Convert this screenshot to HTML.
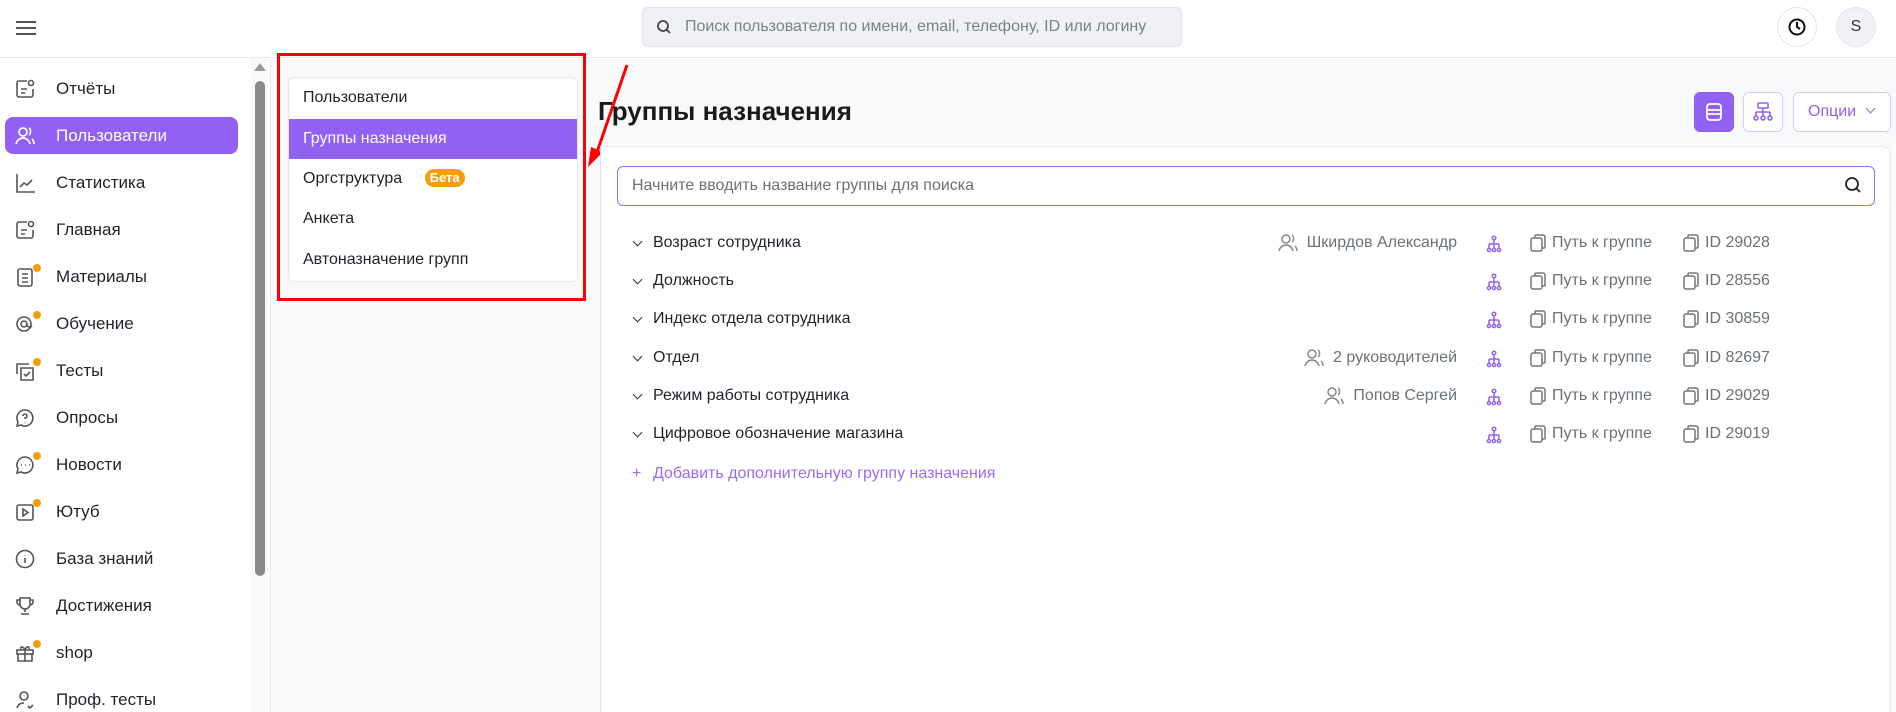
<!DOCTYPE html>
<html style="height:712px;overflow:hidden"><head><meta charset="utf-8"><style>
*{box-sizing:border-box;margin:0;padding:0}
body{width:1896px;height:712px;overflow:hidden;background:#fff;font-family:"Liberation Sans","Noto Sans CJK SC",sans-serif;color:#1f2329;position:relative}
.abs{position:absolute}
.top{left:0;top:0;width:1896px;height:58px;border-bottom:1px solid #e6e8ec;background:#fff}
.search{left:642px;top:7px;width:540px;height:40px;background:#f0f1f4;border:1px solid #e3e5ea;border-radius:6px;font-size:16px;color:#7a7f88;padding:0 0 0 42px;line-height:38px}
.circ{width:40px;height:40px;border-radius:50%;border:1px solid #e3e5ea;top:7px}
.side a{position:absolute;left:5px;width:233px;height:37px;border-radius:8px;font-size:17px;line-height:37px;padding-left:51px;color:#1f2329;text-decoration:none}
.side a.act{background:#9260f2;color:#fff}
.side svg{position:absolute;left:9px;top:8px}
.dot{position:absolute;left:28px;top:6px;width:8px;height:8px;border-radius:50%;background:#f59e0b}
.gray{background:#f8f9fb}
.card{left:288px;top:77px;width:290px;height:205px;background:#fff;border:1px solid #e6e8ec;border-radius:6px}
.ci{position:absolute;left:0;width:288px;height:40px;font-size:16px;line-height:40px;padding-left:14px}
.row{position:absolute;left:600px;width:1290px;height:38px;font-size:16px;line-height:38px}
.g{color:#6b7079}
.per{position:absolute;right:433px;top:0;display:flex;align-items:center;height:38px;gap:8px}
</style></head><body>
<div class="abs top"></div>
<div class="abs" style="left:16px;top:21px;width:20px;height:2px;background:#555;box-shadow:0 6px 0 #555,0 12px 0 #555"></div>
<div class="abs search">Поиск пользователя по имени, email, телефону, ID или логину</div>
<svg class="abs" style="left:656px;top:19px" width="16" height="16" viewBox="0 0 16 16"><circle cx="7" cy="7" r="5" fill="none" stroke="#444" stroke-width="1.8"/><path d="M11 11l3 3" stroke="#444" stroke-width="1.8"/></svg>
<div class="abs circ" style="left:1777px;background:#fff"></div>
<svg class="abs" style="left:1787px;top:17px" width="20" height="20" viewBox="0 0 20 20"><circle cx="10" cy="10" r="7.5" fill="none" stroke="#111" stroke-width="2"/><path d="M10 5v5l3 2" stroke="#111" stroke-width="2" fill="none"/></svg>
<div class="abs circ" style="left:1836px;background:#f0f1f4;text-align:center;line-height:38px;font-size:16px;color:#333">S</div>

<div class="abs side" style="left:0;top:58px;width:251px;height:654px">
<a style="top:12px"><svg width="22" height="22" viewBox="0 0 22 22" fill="none" stroke="#555" stroke-width="1.6"><path d="M13 3H5a2 2 0 0 0-2 2v12a2 2 0 0 0 2 2h12a2 2 0 0 0 2-2v-6"/><circle cx="17" cy="5" r="2.5"/><path d="M7 11h6M7 15h4"/></svg>Отчёты</a>
<a class="act" style="top:59px"><svg width="22" height="22" viewBox="0 0 22 22" fill="none" stroke="#fff" stroke-width="1.7"><circle cx="9" cy="7" r="4"/><path d="M2 19c1-4 4-6 7-6s6 2 7 6M15 3c2 1 2 6 0 7M18 14c1 1 2 3 2 5"/></svg>Пользователи</a>
<a style="top:106px"><svg width="22" height="22" viewBox="0 0 22 22" fill="none" stroke="#555" stroke-width="1.6"><path d="M3 2v18h18M6 15l4-4 3 2 5-5"/></svg>Статистика</a>
<a style="top:153px"><svg width="22" height="22" viewBox="0 0 22 22" fill="none" stroke="#555" stroke-width="1.6"><path d="M13 3H5a2 2 0 0 0-2 2v12a2 2 0 0 0 2 2h12a2 2 0 0 0 2-2v-6"/><circle cx="17" cy="5" r="2.5"/><path d="M7 11h6M7 15h4"/></svg>Главная</a>
<a style="top:200px"><svg width="22" height="22" viewBox="0 0 22 22" fill="none" stroke="#555" stroke-width="1.6"><rect x="4" y="3" width="14" height="17" rx="2"/><path d="M8 8h6M8 12h6M8 16h6"/></svg><span class="dot"></span>Материалы</a>
<a style="top:247px"><svg width="22" height="22" viewBox="0 0 22 22" fill="none" stroke="#555" stroke-width="1.6"><circle cx="10" cy="11" r="7"/><circle cx="10" cy="11" r="3"/><path d="M13 11c0 3 3 4 5 2"/></svg><span class="dot"></span>Обучение</a>
<a style="top:294px"><svg width="22" height="22" viewBox="0 0 22 22" fill="none" stroke="#555" stroke-width="1.6"><path d="M3 14V4h12M7 8h12v12H7z"/><path d="M10 14l2 2 4-4"/></svg><span class="dot"></span>Тесты</a>
<a style="top:341px"><svg width="22" height="22" viewBox="0 0 22 22" fill="none" stroke="#555" stroke-width="1.6"><path d="M11 3a8 8 0 1 1-4 15l-4 1 1-4A8 8 0 0 1 11 3z"/><path d="M9 9a2 2 0 1 1 2 2v1M11 15v.5"/></svg>Опросы</a>
<a style="top:388px"><svg width="22" height="22" viewBox="0 0 22 22" fill="none" stroke="#555" stroke-width="1.6"><path d="M11 3a8 8 0 1 1-4 15l-4 1 1-4A8 8 0 0 1 11 3z"/><path d="M7 11h1M11 11h1M15 11h1"/></svg><span class="dot"></span>Новости</a>
<a style="top:435px"><svg width="22" height="22" viewBox="0 0 22 22" fill="none" stroke="#555" stroke-width="1.6"><rect x="3" y="4" width="16" height="15" rx="2"/><path d="M9 8v7l5-3.5z"/></svg><span class="dot"></span>Ютуб</a>
<a style="top:482px"><svg width="22" height="22" viewBox="0 0 22 22" fill="none" stroke="#555" stroke-width="1.6"><circle cx="11" cy="11" r="8.5"/><path d="M11 10v5M11 7v.5"/></svg>База знаний</a>
<a style="top:529px"><svg width="22" height="22" viewBox="0 0 22 22" fill="none" stroke="#555" stroke-width="1.6"><path d="M6 3h10v6a5 5 0 0 1-10 0zM6 5H3v2a3 3 0 0 0 3 3M16 5h3v2a3 3 0 0 1-3 3M11 14v3M7 19h8"/></svg>Достижения</a>
<a style="top:576px"><svg width="22" height="22" viewBox="0 0 22 22" fill="none" stroke="#555" stroke-width="1.6"><rect x="3" y="8" width="16" height="4"/><path d="M4 12v7h14v-7M11 8v11M11 8C9 4 6 4 7 7M11 8c1-4 5-4 4-1"/></svg><span class="dot"></span>shop</a>
<a style="top:623px"><svg width="22" height="22" viewBox="0 0 22 22" fill="none" stroke="#555" stroke-width="1.6"><circle cx="10" cy="7" r="4"/><path d="M3 19c1-4 4-5 7-5M14 17l2 2 3-3"/></svg>Проф. тесты</a>
</div>
<div class="abs gray" style="left:251px;top:58px;width:17px;height:654px"></div>
<div class="abs" style="left:254px;top:63px;width:0;height:0;border-left:6px solid transparent;border-right:6px solid transparent;border-bottom:8px solid #999"></div>
<div class="abs" style="left:255px;top:81px;width:10px;height:495px;background:#8a8a8a;border-radius:5px"></div>

<div class="abs gray" style="left:270px;top:59px;width:1626px;height:653px;border-left:1px solid #e6e8ec"></div>
<div class="abs card">
<div class="ci" style="top:0">Пользователи</div>
<div class="ci" style="top:41px;background:#9260f2;color:#fff">Группы назначения</div>
<div class="ci" style="top:81px">Оргструктура <span style="display:inline-block;margin-left:18px;background:#f59e0b;color:#fff;font-size:13px;font-weight:bold;line-height:18px;padding:0 5px;border-radius:9px;vertical-align:1px">Бета</span></div>
<div class="ci" style="top:121px">Анкета</div>
<div class="ci" style="top:162px">Автоназначение групп</div>
</div>
<div class="abs" style="left:277px;top:53px;width:309px;height:248px;border:3px solid #f00"></div>
<svg class="abs" style="left:580px;top:60px" width="60" height="115"><path d="M47 5L16 95" stroke="#f00" stroke-width="3"/><path d="M8 107l3-20 12 5z" fill="#f00"/></svg>

<div class="abs" style="left:598px;top:96px;font-size:26px;font-weight:bold;color:#1a1a1a">Группы назначения</div>
<div class="abs" style="left:1694px;top:92px;width:40px;height:40px;background:#9260f2;border-radius:6px"></div>
<svg class="abs" style="left:1703px;top:101px" width="22" height="22" viewBox="0 0 22 22" fill="none" stroke="#fff" stroke-width="1.8"><rect x="4" y="3" width="14" height="16" rx="3"/><path d="M4 9h14M4 13h14"/></svg>
<div class="abs" style="left:1743px;top:92px;width:40px;height:40px;border:1px solid #d9c8fb;border-radius:6px;background:#fff"></div>
<svg class="abs" style="left:1752px;top:101px" width="22" height="22" viewBox="0 0 22 22" fill="none" stroke="#9260f2" stroke-width="1.6"><rect x="6" y="2" width="10" height="5" rx="1"/><path d="M11 7v4M4 11h14M4 11v4M11 11v4M18 11v4"/><circle cx="4" cy="17" r="2"/><circle cx="11" cy="17" r="2"/><circle cx="18" cy="17" r="2"/></svg>
<div class="abs" style="left:1793px;top:92px;width:98px;height:40px;border:1px solid #d9c8fb;border-radius:6px;background:#fff;color:#9260f2;font-size:16px;line-height:38px;padding-left:14px">Опции <span style="display:inline-block;width:7px;height:7px;border-right:1.5px solid #9260f2;border-bottom:1.5px solid #9260f2;transform:rotate(45deg);margin:0 0 4px 6px"></span></div>

<div class="abs" style="left:600px;top:146px;width:1291px;height:566px;background:#fff;border:1px solid #e6e8ec;border-bottom:none;border-radius:0 8px 0 0"></div>
<div class="abs" style="left:617px;top:166px;width:1258px;height:40px;border:1.5px solid #9b6cf3;border-radius:6px;font-size:16px;color:#6b7079;line-height:37px;padding-left:14px">Начните вводить название группы для поиска</div>
<svg class="abs" style="left:1844px;top:176px" width="18" height="18" viewBox="0 0 18 18"><circle cx="8" cy="8" r="6" fill="none" stroke="#222" stroke-width="1.8"/><path d="M12.5 12.5l3.5 3.5" stroke="#222" stroke-width="1.8"/></svg>

<div id="rows"></div>
<script>
var d=[["Возраст сотрудника","Шкирдов Александр","29028"],["Должность","","28556"],["Индекс отдела сотрудника","","30859"],["Отдел","2 руководителей","82697"],["Режим работы сотрудника","Попов Сергей","29029"],["Цифровое обозначение магазина","","29019"]];
var ys=[224,262,300,339,377,415],h="";
var copy='<svg width="18" height="20" viewBox="0 0 18 20" fill="none" stroke="#777" stroke-width="1.5" style="position:absolute;top:9px;left:LEFTpx"><rect x="2" y="5" width="11" height="13" rx="2"/><path d="M6 5V3a1 1 0 0 1 1-1h7a2 2 0 0 1 2 2v10a1 1 0 0 1-1 1h-2"/></svg>';
d.forEach(function(r,i){
h+='<div class="row" style="top:'+ys[i]+'px"><span style="position:absolute;left:34px;top:14px;width:7px;height:7px;border-right:1.6px solid #333;border-bottom:1.6px solid #333;transform:rotate(45deg)"></span><span style="position:absolute;left:53px">'+r[0]+'</span>';
if(r[1]){h+='<div class="per"><svg width="22" height="22" viewBox="0 0 22 22" fill="none" stroke="#888" stroke-width="1.5"><circle cx="9" cy="7" r="4"/><path d="M2 19c1-4 4-6 7-6s6 2 7 6M15 3c2 1 2 6 0 7M18 14c1 1 2 3 2 5"/></svg><span class="g">'+r[1]+'</span></div>';}
h+='<svg width="16" height="18" viewBox="0 0 16 18" fill="none" stroke="#9260f2" stroke-width="1.5" style="position:absolute;top:11px;left:886px"><circle cx="8" cy="3" r="1.8"/><path d="M8 5v4M3 9h10M3 9v4M8 9v4M13 9v4"/><circle cx="3" cy="15" r="1.6"/><circle cx="8" cy="15" r="1.6"/><circle cx="13" cy="15" r="1.6"/></svg>';
h+=copy.replace('LEFT',929)+'<span class="g" style="position:absolute;left:952px">Путь к группе</span>'+copy.replace('LEFT',1082)+'<span class="g" style="position:absolute;left:1105px">ID '+r[2]+'</span></div>';
});
h+='<div class="row" style="top:455px;color:#9b6cf3"><span style="position:absolute;left:32px">+</span><span style="position:absolute;left:53px">Добавить дополнительную группу назначения</span></div>';
document.getElementById("rows").innerHTML=h;
</script>
</body></html>
